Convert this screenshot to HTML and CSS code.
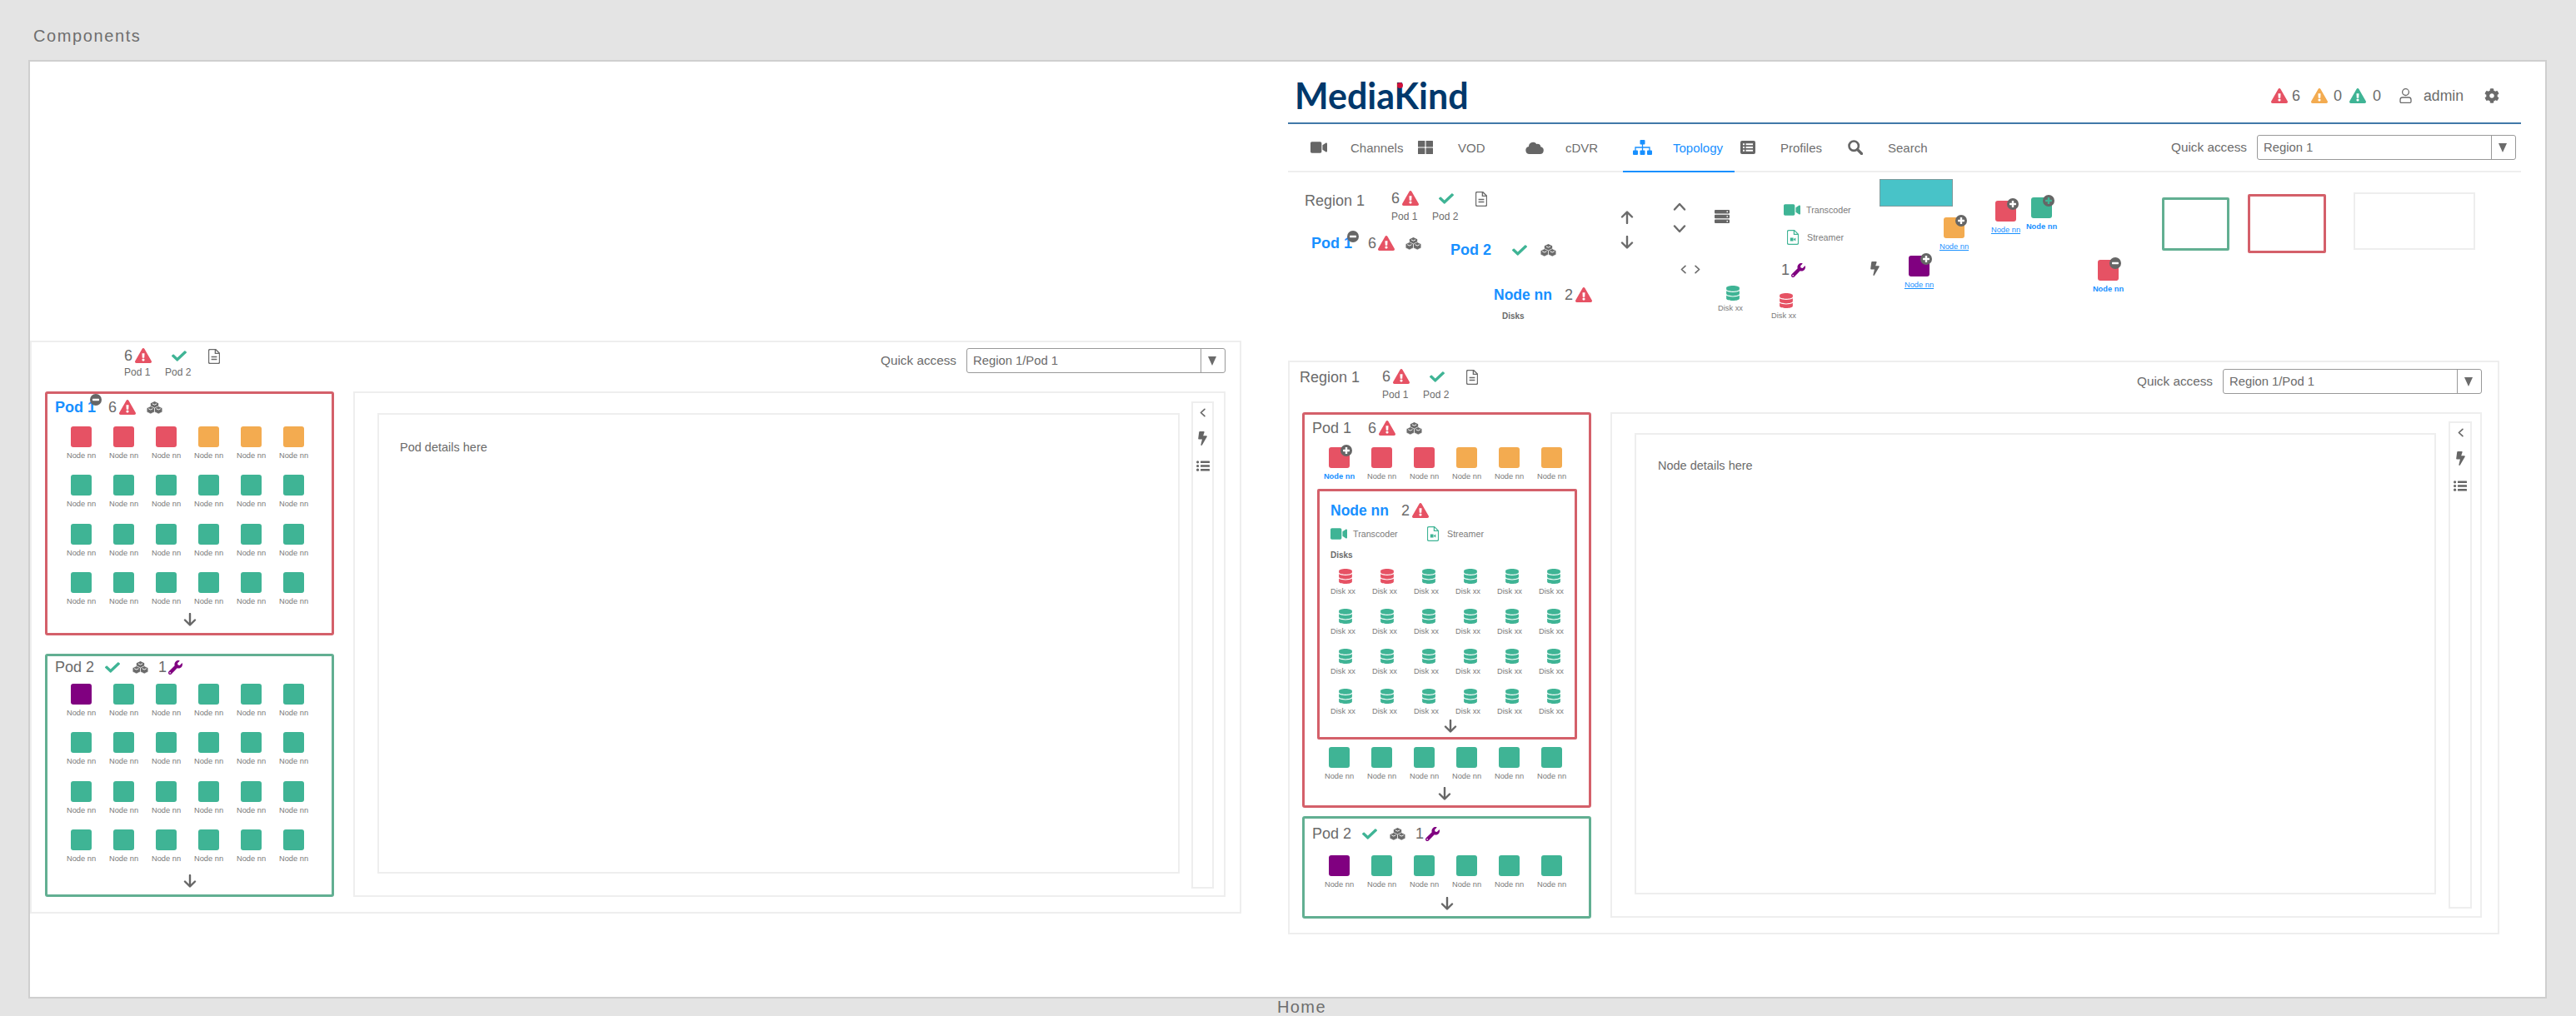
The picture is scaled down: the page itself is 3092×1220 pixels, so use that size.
FILE: index.html
```html
<!DOCTYPE html>
<html lang="en">
<head>
<meta charset="utf-8">
<title>Components</title>
<link rel="stylesheet" href="styles.css">
</head>
<body>
<svg class="defs" aria-hidden="true">
  <symbol id="alert" viewBox="0 0 576 512"><path d="M569.517 440.013C587.975 472.007 564.806 512 527.94 512H48.054c-36.937 0-59.999-40.055-41.577-71.987L246.423 23.985c18.467-32.009 64.72-31.951 83.154 0l239.94 416.028zM288 354c-25.405 0-46 20.595-46 46s20.595 46 46 46 46-20.595 46-46-20.595-46-46-46zm-43.673-165.346l7.418 136c.347 6.364 5.609 11.346 11.982 11.346h48.546c6.373 0 11.635-4.982 11.982-11.346l7.418-136c.375-6.874-5.098-12.654-11.982-12.654h-63.383c-6.884 0-12.356 5.78-11.981 12.654z"/></symbol>
  <symbol id="check" viewBox="0 60 512 392" preserveAspectRatio="none"><path d="M173.898 439.404l-166.4-166.4c-9.997-9.997-9.997-26.206 0-36.204l36.203-36.204c9.997-9.998 26.207-9.998 36.204 0L192 312.69 432.095 72.596c9.997-9.997 26.207-9.997 36.204 0l36.203 36.204c9.997 9.997 9.997 26.206 0 36.204l-294.4 294.401c-9.998 9.997-26.207 9.997-36.204-.001z"/></symbol>
  <symbol id="doc" viewBox="0 0 14 18"><path d="M1.5.5h7.2l4.8 4.8v10.5q0 1.7-1.7 1.7H2.2q-1.7 0-1.7-1.7V2.2Q.5.5 2.2.5z" fill="none" stroke="currentColor" stroke-width="1.4"/><path d="M8.4.8v4.6h4.8M3.6 9.5h6.8M3.6 12.5h6.8" fill="none" stroke="currentColor" stroke-width="1.4"/></symbol>
  <symbol id="cubes" viewBox="0 0 20 16"><path d="M10 0l5 2.500v5L10 10 5 7.500v-5z"/><path d="M5 6l5 2.500v5L5 16l-5-2.500v-5z" stroke="#fff" stroke-width=".7"/><path d="M15 6l5 2.500v5L15 16l-5-2.500v-5z" stroke="#fff" stroke-width=".7"/><path d="M7.200 3L10 4.400 12.800 3M2.200 9.300L5 10.700l2.800-1.400M12.200 9.300l2.800 1.400 2.800-1.400" fill="none" stroke="#fff" stroke-width="1"/></symbol>
  <symbol id="wrench" viewBox="0 0 512 512"><path d="M507.73 109.1c-2.24-9.03-13.54-12.09-20.12-5.51l-74.36 74.36-67.88-11.31-11.31-67.88 74.36-74.36c6.62-6.62 3.43-17.9-5.66-20.16-47.38-11.74-99.55.91-136.58 37.93-39.64 39.64-50.55 97.1-34.05 147.2L18.74 402.76c-24.99 24.99-24.99 65.51 0 90.5 24.99 24.99 65.51 24.99 90.5 0l213.21-213.21c50.12 16.71 107.47 5.68 147.37-34.22 37.07-37.07 49.7-89.32 37.91-136.73zM64 472c-13.25 0-24-10.75-24-24 0-13.26 10.75-24 24-24s24 10.74 24 24c0 13.25-10.75 24-24 24z"/></symbol>
  <symbol id="bolt" viewBox="0 0 320 512"><path d="M296 160H180.6l42.6-129.8C227.2 15 215.700 0 200 0H56C44 0 33.800 8.900 32.200 20.800l-32 240C-1.700 275.200 9.500 288 24 288h118.700L96.600 482.500c-3.600 15.200 8 29.500 23.300 29.500 8.400 0 16.400-4.400 20.800-12l176-304c9.300-15.900-2.200-36-20.700-36z"/></symbol>
  <symbol id="list" viewBox="0 0 16 13"><circle cx="1.600" cy="1.800" r="1.600"/><circle cx="1.600" cy="6.500" r="1.600"/><circle cx="1.600" cy="11.200" r="1.600"/><rect x="5" y=".6" width="11" height="2.400" rx=".5"/><rect x="5" y="5.300" width="11" height="2.400" rx=".5"/><rect x="5" y="10" width="11" height="2.400" rx=".5"/></symbol>
  <symbol id="disk" viewBox="0 0 448 512"><path d="M448 73.143v45.714C448 159.143 347.667 192 224 192S0 159.143 0 118.857V73.143C0 32.857 100.333 0 224 0s224 32.857 224 73.143zM448 176v102.857C448 319.143 347.667 352 224 352S0 319.143 0 278.857V176c48.125 33.143 136.208 48.572 224 48.572S399.874 209.143 448 176zm0 160v102.857C448 479.143 347.667 512 224 512S0 479.143 0 438.857V336c48.125 33.143 136.208 48.572 224 48.572S399.874 369.143 448 336z"/></symbol>
  <symbol id="video" viewBox="0 64 576 384"><path d="M336.200 64H47.800C21.400 64 0 85.400 0 111.800v288.400C0 426.600 21.400 448 47.800 448h288.400c26.400 0 47.800-21.400 47.800-47.800V111.800c0-26.400-21.400-47.800-47.800-47.800zm189.400 37.700L416 177.300v157.400l109.600 75.500c21.200 14.600 50.400-.3 50.400-25.800V127.500c0-25.400-29.100-40.400-50.400-25.800z"/></symbol>
  <symbol id="filevideo" viewBox="0 0 14 18"><path d="M1.500.6h7.200l4.800 4.800v10.400q0 1.600-1.600 1.600H2.100q-1.600 0-1.600-1.600V2.200Q.5.600 2.100.6z" fill="none" stroke="currentColor" stroke-width="1.200"/><path d="M8.400.8v4.600h4.800" fill="none" stroke="currentColor" stroke-width="1.200"/><path d="M3.800 9.500h3.800v4H3.800zM8.100 11l2.200-1.500v4L8.100 12z"/></symbol>
  <symbol id="grid4" viewBox="0 0 18 16"><rect width="8.400" height="7.500" rx=".6"/><rect x="9.600" width="8.400" height="7.500" rx=".6"/><rect y="8.500" width="8.400" height="7.500" rx=".6"/><rect x="9.600" y="8.500" width="8.400" height="7.500" rx=".6"/></symbol>
  <symbol id="cloud" viewBox="0 0 22 15"><path d="M5 15a4.600 4.600 0 0 1-1-9.100A5.200 5.200 0 0 1 13.400 3a3.600 3.600 0 0 1 4.900 3.300A4.400 4.400 0 0 1 17.500 15z"/></symbol>
  <symbol id="sitemap" viewBox="0 0 23 18"><rect x="8.500" width="6" height="5.500" rx="1"/><rect y="12.500" width="6" height="5.500" rx="1"/><rect x="8.500" y="12.500" width="6" height="5.500" rx="1"/><rect x="17" y="12.500" width="6" height="5.500" rx="1"/><path d="M11.500 5v8M3 13V9h17v4" fill="none" stroke="currentColor" stroke-width="1.300"/></symbol>
  <symbol id="listalt" viewBox="0 0 18 16"><path fill-rule="evenodd" d="M2 0h14a2 2 0 0 1 2 2v12a2 2 0 0 1-2 2H2a2 2 0 0 1-2-2V2a2 2 0 0 1 2-2zM3 3.200v2h2v-2zM6.500 3.200v2H15v-2zM3 7v2h2V7zM6.500 7v2H15V7zM3 10.800v2h2v-2zM6.500 10.800v2H15v-2z"/></symbol>
  <symbol id="search" viewBox="0 0 18 18"><circle cx="7.200" cy="7.200" r="5.700" fill="none" stroke="currentColor" stroke-width="2.600"/><path d="M11.500 11.500l5 5" stroke="currentColor" stroke-width="3.200" stroke-linecap="round"/></symbol>
  <symbol id="user" viewBox="0 0 15 18"><circle cx="7.500" cy="4.600" r="3.900" fill="none" stroke="currentColor" stroke-width="1.300"/><path d="M1 16v-2.300q0-2.700 2.700-2.700h7.600q2.700 0 2.700 2.700V16q0 1.300-1.300 1.300H2.300Q1 17.300 1 16z" fill="none" stroke="currentColor" stroke-width="1.300"/></symbol>
  <symbol id="gear" viewBox="0 0 512 512"><path d="M487.400 315.700l-42.600-24.600c4.300-23.200 4.300-47 0-70.200l42.600-24.600c4.900-2.800 7.100-8.600 5.500-14-11.100-35.600-30-67.800-54.700-94.600-3.800-4.100-10-5.100-14.800-2.300L380.800 110c-17.900-15.400-38.500-27.300-60.800-35.100V25.800c0-5.600-3.900-10.500-9.400-11.700-36.700-8.200-74.300-7.800-109.200 0-5.500 1.200-9.400 6.100-9.400 11.700V75c-22.200 7.900-42.800 19.800-60.800 35.100L88.700 85.500c-4.900-2.800-11-1.900-14.800 2.300-24.700 26.700-43.600 58.900-54.700 94.600-1.700 5.400.6 11.200 5.500 14L67.300 221c-4.300 23.200-4.300 47 0 70.200l-42.600 24.600c-4.900 2.800-7.100 8.600-5.500 14 11.100 35.600 30 67.800 54.700 94.600 3.800 4.100 10 5.100 14.800 2.300l42.600-24.600c17.900 15.400 38.500 27.300 60.800 35.100v49.200c0 5.600 3.900 10.500 9.400 11.700 36.700 8.200 74.300 7.800 109.200 0 5.500-1.200 9.400-6.100 9.400-11.700v-49.200c22.200-7.900 42.800-19.800 60.800-35.100l42.600 24.600c4.900 2.800 11 1.900 14.800-2.300 24.700-26.700 43.600-58.900 54.700-94.600 1.500-5.500-.7-11.300-5.600-14.100zM256 336c-44.100 0-80-35.900-80-80s35.900-80 80-80 80 35.900 80 80-35.900 80-80 80z"/></symbol>
  <symbol id="server" viewBox="0 0 18 16"><path fill-rule="evenodd" d="M1 0h16a1 1 0 0 1 1 1v2.600a1 1 0 0 1-1 1H1a1 1 0 0 1-1-1V1a1 1 0 0 1 1-1zM14.500 1.600v1.500H16V1.600zM1 5.700h16a1 1 0 0 1 1 1v2.600a1 1 0 0 1-1 1H1a1 1 0 0 1-1-1V6.700a1 1 0 0 1 1-1zM14.500 7.250v1.500H16v-1.500zM1 11.400h16a1 1 0 0 1 1 1V15a1 1 0 0 1-1 1H1a1 1 0 0 1-1-1v-2.600a1 1 0 0 1 1-1zM14.500 13v1.500H16V13z"/></symbol>
  <symbol id="down" viewBox="0 0 16 16"><path d="M8 1v13M2 8.500L8 14.500l6-6" fill="none" stroke="currentColor" stroke-width="2.400" stroke-linecap="round" stroke-linejoin="round"/></symbol>
  <symbol id="up" viewBox="0 0 16 16"><path d="M8 15V2M2 7.500L8 1.500l6 6" fill="none" stroke="currentColor" stroke-width="2.400" stroke-linecap="round" stroke-linejoin="round"/></symbol>
  <symbol id="chev" viewBox="0 0 16 10"><path d="M2 8.500L8 2l6 6.500" fill="none" stroke="currentColor" stroke-width="2.400" stroke-linecap="round" stroke-linejoin="round"/></symbol>
  <symbol id="plusb" viewBox="0 0 14 14"><circle cx="7" cy="7" r="7"/><rect x="3" y="5.800" width="8" height="2.400" rx=".6" fill="#fff"/><rect x="5.800" y="3" width="2.400" height="8" rx=".6" fill="#fff"/></symbol>
  <symbol id="plusg" viewBox="0 0 14 14"><circle cx="7" cy="7" r="7"/><rect x="3" y="5.800" width="8" height="2.400" rx=".6" fill="#3fb495"/><rect x="5.800" y="3" width="2.400" height="8" rx=".6" fill="#3fb495"/></symbol>
  <symbol id="minusb" viewBox="0 0 14 14"><circle cx="7" cy="7" r="7"/><rect x="3" y="5.800" width="8" height="2.400" rx=".6" fill="#fff"/></symbol>
</svg>

<main class="canvas">
  <h1 class="page-title">Components</h1>
  <div class="artboard"></div>
  <h2 class="board-name">Home</h2>

  <!-- Pod details frame -->
  <section class="frame frame-pod">
    <header class="head head-pod">
      <div class="status status-pod">
        <div class="st-col st-a"><div class="st-top"><span>6</span><svg class="i-alert red"><use href="#alert"/></svg></div><div class="st-lab">Pod 1</div></div>
        <div class="st-col st-b"><div class="st-top st-ck"><svg class="i-check green"><use href="#check"/></svg></div><div class="st-lab">Pod 2</div></div>
        <svg class="i-doc"><use href="#doc"/></svg>
      </div>
      <div class="quick"><span class="q-lab">Quick access</span><div class="select"><span class="sel-text">Region 1/Pod 1</span><span class="sel-btn"></span></div></div>
    </header>
    <div class="body body-pod">
      <div class="pods pods-pod">
        <article class="pod bad pod-a">
          <div class="pod-title"><span class="t-blue">Pod 1</span><svg class="badge badge-title"><use href="#minusb"/></svg><span class="cnt c-a">6</span><svg class="i-alert red"><use href="#alert"/></svg><svg class="i-cubes c-cubes"><use href="#cubes"/></svg></div>
          <div class="nodes g-top11">
            <div class="nd r"><i></i>Node nn</div><div class="nd r"><i></i>Node nn</div><div class="nd r"><i></i>Node nn</div><div class="nd o"><i></i>Node nn</div><div class="nd o"><i></i>Node nn</div><div class="nd o"><i></i>Node nn</div>
            <div class="nd g"><i></i>Node nn</div><div class="nd g"><i></i>Node nn</div><div class="nd g"><i></i>Node nn</div><div class="nd g"><i></i>Node nn</div><div class="nd g"><i></i>Node nn</div><div class="nd g"><i></i>Node nn</div>
            <div class="nd g"><i></i>Node nn</div><div class="nd g"><i></i>Node nn</div><div class="nd g"><i></i>Node nn</div><div class="nd g"><i></i>Node nn</div><div class="nd g"><i></i>Node nn</div><div class="nd g"><i></i>Node nn</div>
            <div class="nd g"><i></i>Node nn</div><div class="nd g"><i></i>Node nn</div><div class="nd g"><i></i>Node nn</div><div class="nd g"><i></i>Node nn</div><div class="nd g"><i></i>Node nn</div><div class="nd g"><i></i>Node nn</div>
          </div>
          <div class="more m8"><svg class="i-down"><use href="#down"/></svg></div>
        </article>
        <article class="pod ok pod-b">
          <div class="pod-title pt1"><span class="t-grey">Pod 2</span><svg class="i-check green ck-t"><use href="#check"/></svg><svg class="i-cubes cb-t"><use href="#cubes"/></svg><span class="cnt c-w">1</span><svg class="i-wrench"><use href="#wrench"/></svg></div>
          <div class="nodes g-top8">
            <div class="nd p"><i></i>Node nn</div><div class="nd g"><i></i>Node nn</div><div class="nd g"><i></i>Node nn</div><div class="nd g"><i></i>Node nn</div><div class="nd g"><i></i>Node nn</div><div class="nd g"><i></i>Node nn</div>
            <div class="nd g"><i></i>Node nn</div><div class="nd g"><i></i>Node nn</div><div class="nd g"><i></i>Node nn</div><div class="nd g"><i></i>Node nn</div><div class="nd g"><i></i>Node nn</div><div class="nd g"><i></i>Node nn</div>
            <div class="nd g"><i></i>Node nn</div><div class="nd g"><i></i>Node nn</div><div class="nd g"><i></i>Node nn</div><div class="nd g"><i></i>Node nn</div><div class="nd g"><i></i>Node nn</div><div class="nd g"><i></i>Node nn</div>
            <div class="nd g"><i></i>Node nn</div><div class="nd g"><i></i>Node nn</div><div class="nd g"><i></i>Node nn</div><div class="nd g"><i></i>Node nn</div><div class="nd g"><i></i>Node nn</div><div class="nd g"><i></i>Node nn</div>
          </div>
          <div class="more m13"><svg class="i-down"><use href="#down"/></svg></div>
        </article>
      </div>
      <div class="details">
        <div class="det-inner"><p class="det-text">Pod details here</p></div>
        <aside class="strip"><svg class="i-chev-l"><use href="#chev"/></svg><svg class="i-bolt"><use href="#bolt"/></svg><svg class="i-list"><use href="#list"/></svg></aside>
      </div>
    </div>
  </section>

  <!-- Node details frame -->
  <section class="frame frame-node">
    <header class="head head-node">
      <div class="region">Region 1</div>
      <div class="status status-node">
        <div class="st-col st-a"><div class="st-top"><span>6</span><svg class="i-alert red"><use href="#alert"/></svg></div><div class="st-lab lab4">Pod 1</div></div>
        <div class="st-col st-b"><div class="st-top st-ck"><svg class="i-check green"><use href="#check"/></svg></div><div class="st-lab lab4">Pod 2</div></div>
        <svg class="i-doc"><use href="#doc"/></svg>
      </div>
      <div class="quick q8"><span class="q-lab">Quick access</span><div class="select"><span class="sel-text">Region 1/Pod 1</span><span class="sel-btn"></span></div></div>
    </header>
    <div class="body body-node">
      <div class="pods pods-node">
        <article class="pod bad pod-c">
          <div class="pod-title"><span class="t-grey">Pod 1</span><span class="cnt c-b">6</span><svg class="i-alert red"><use href="#alert"/></svg><svg class="i-cubes c-cubes"><use href="#cubes"/></svg></div>
          <div class="nodes g-top11">
            <div class="nd r sel"><i><svg class="badge"><use href="#plusb"/></svg></i>Node nn</div><div class="nd r"><i></i>Node nn</div><div class="nd r"><i></i>Node nn</div><div class="nd o"><i></i>Node nn</div><div class="nd o"><i></i>Node nn</div><div class="nd o"><i></i>Node nn</div>
          </div>
          <section class="node-box">
            <div class="nb-title"><span class="nb-name">Node nn</span><span class="cnt c-n">2</span><svg class="i-alert red"><use href="#alert"/></svg></div>
            <div class="services"><span class="svc svc-t"><svg class="i-video green"><use href="#video"/></svg>Transcoder</span><span class="svc"><svg class="i-filev green"><use href="#filevideo"/></svg>Streamer</span></div>
            <div class="disks-title">Disks</div>
            <div class="disks">
              <div class="dk r"><svg><use href="#disk"/></svg><span>Disk xx</span></div><div class="dk r"><svg><use href="#disk"/></svg><span>Disk xx</span></div><div class="dk"><svg><use href="#disk"/></svg><span>Disk xx</span></div><div class="dk"><svg><use href="#disk"/></svg><span>Disk xx</span></div><div class="dk"><svg><use href="#disk"/></svg><span>Disk xx</span></div><div class="dk"><svg><use href="#disk"/></svg><span>Disk xx</span></div>
              <div class="dk"><svg><use href="#disk"/></svg><span>Disk xx</span></div><div class="dk"><svg><use href="#disk"/></svg><span>Disk xx</span></div><div class="dk"><svg><use href="#disk"/></svg><span>Disk xx</span></div><div class="dk"><svg><use href="#disk"/></svg><span>Disk xx</span></div><div class="dk"><svg><use href="#disk"/></svg><span>Disk xx</span></div><div class="dk"><svg><use href="#disk"/></svg><span>Disk xx</span></div>
              <div class="dk"><svg><use href="#disk"/></svg><span>Disk xx</span></div><div class="dk"><svg><use href="#disk"/></svg><span>Disk xx</span></div><div class="dk"><svg><use href="#disk"/></svg><span>Disk xx</span></div><div class="dk"><svg><use href="#disk"/></svg><span>Disk xx</span></div><div class="dk"><svg><use href="#disk"/></svg><span>Disk xx</span></div><div class="dk"><svg><use href="#disk"/></svg><span>Disk xx</span></div>
              <div class="dk"><svg><use href="#disk"/></svg><span>Disk xx</span></div><div class="dk"><svg><use href="#disk"/></svg><span>Disk xx</span></div><div class="dk"><svg><use href="#disk"/></svg><span>Disk xx</span></div><div class="dk"><svg><use href="#disk"/></svg><span>Disk xx</span></div><div class="dk"><svg><use href="#disk"/></svg><span>Disk xx</span></div><div class="dk"><svg><use href="#disk"/></svg><span>Disk xx</span></div>
            </div>
            <div class="more m4 shift"><svg class="i-down"><use href="#down"/></svg></div>
          </section>
          <div class="nodes g-top9">
            <div class="nd g"><i></i>Node nn</div><div class="nd g"><i></i>Node nn</div><div class="nd g"><i></i>Node nn</div><div class="nd g"><i></i>Node nn</div><div class="nd g"><i></i>Node nn</div><div class="nd g"><i></i>Node nn</div>
          </div>
          <div class="more m7 shift"><svg class="i-down"><use href="#down"/></svg></div>
        </article>
        <article class="pod ok pod-d">
          <div class="pod-title pt6"><span class="t-grey">Pod 2</span><svg class="i-check green ck-t"><use href="#check"/></svg><svg class="i-cubes cb-t"><use href="#cubes"/></svg><span class="cnt c-w">1</span><svg class="i-wrench"><use href="#wrench"/></svg></div>
          <div class="nodes g-top14">
            <div class="nd p"><i></i>Node nn</div><div class="nd g"><i></i>Node nn</div><div class="nd g"><i></i>Node nn</div><div class="nd g"><i></i>Node nn</div><div class="nd g"><i></i>Node nn</div><div class="nd g"><i></i>Node nn</div>
          </div>
          <div class="more m9"><svg class="i-down"><use href="#down"/></svg></div>
        </article>
      </div>
      <div class="details details-node">
        <div class="det-inner"><p class="det-text dt-node">Node details here</p></div>
        <aside class="strip strip-node"><svg class="i-chev-l"><use href="#chev"/></svg><svg class="i-bolt"><use href="#bolt"/></svg><svg class="i-list"><use href="#list"/></svg></aside>
      </div>
    </div>
  </section>

  <!-- App shell at the top of the right side -->
  <section class="shell">
    <div class="topbar">
      <div class="logo"><span class="logo-text">MediaKind</span><span class="logo-dot"></span></div>
      <div class="top-right">
        <svg class="i-alert red"><use href="#alert"/></svg><span class="tr-n">6</span>
        <svg class="i-alert orange tr-gap"><use href="#alert"/></svg><span class="tr-n tr-n7">0</span>
        <svg class="i-alert green tr-gap2"><use href="#alert"/></svg><span class="tr-n tr-n8">0</span>
        <svg class="i-user"><use href="#user"/></svg><span class="admin">admin</span>
        <svg class="i-gear"><use href="#gear"/></svg>
      </div>
    </div>
    <nav class="nav">
      <a class="nav-item"><span class="nav-ic"><svg class="n-video"><use href="#video"/></svg></span>Channels</a>
      <a class="nav-item"><span class="nav-ic"><svg class="n-grid"><use href="#grid4"/></svg></span>VOD</a>
      <a class="nav-item"><span class="nav-ic"><svg class="n-cloud"><use href="#cloud"/></svg></span>cDVR</a>
      <a class="nav-item active"><span class="nav-ic"><svg class="n-site"><use href="#sitemap"/></svg></span>Topology</a>
      <a class="nav-item"><span class="nav-ic"><svg class="n-grid"><use href="#listalt"/></svg></span>Profiles</a>
      <a class="nav-item"><span class="nav-ic"><svg class="n-search"><use href="#search"/></svg></span>Search</a>
      <div class="quick q-nav"><span class="q-lab">Quick access</span><div class="select"><span class="sel-text">Region 1</span><span class="sel-btn"></span></div></div>
    </nav>
  </section>

  <!-- Loose component stickers -->
  <div class="s s-region">Region 1</div>
  <div class="s s-status"><div class="st-col st-a"><div class="st-top"><span>6</span><svg class="i-alert red"><use href="#alert"/></svg></div><div class="st-lab lab4">Pod 1</div></div><div class="st-col st-b"><div class="st-top st-ck"><svg class="i-check green"><use href="#check"/></svg></div><div class="st-lab lab4">Pod 2</div></div><svg class="i-doc"><use href="#doc"/></svg></div>
  <div class="s s-pod1 pod-title"><span class="t-blue">Pod 1</span><svg class="badge badge-s"><use href="#minusb"/></svg><span class="cnt c-s">6</span><svg class="i-alert red"><use href="#alert"/></svg><svg class="i-cubes c-cubes"><use href="#cubes"/></svg></div>
  <div class="s s-pod2 pod-title"><span class="t-blue">Pod 2</span><svg class="i-check green ck-s"><use href="#check"/></svg><svg class="i-cubes cb-s"><use href="#cubes"/></svg></div>
  <div class="s s-node nb-title"><span class="nb-name">Node nn</span><span class="cnt c-n">2</span><svg class="i-alert red"><use href="#alert"/></svg></div>
  <div class="s s-disks disks-title">Disks</div>
  <svg class="s s-up i-down"><use href="#up"/></svg>
  <svg class="s s-dn i-down"><use href="#down"/></svg>
  <svg class="s s-cu i-chev"><use href="#chev"/></svg>
  <svg class="s s-cd i-chev flip"><use href="#chev"/></svg>
  <svg class="s s-server"><use href="#server"/></svg>
  <svg class="s s-cl i-chev-l"><use href="#chev"/></svg>
  <svg class="s s-cr i-chev-l flipx"><use href="#chev"/></svg>
  <div class="s s-trans svc"><svg class="i-video green"><use href="#video"/></svg>Transcoder</div>
  <div class="s s-stream svc"><svg class="i-filev green"><use href="#filevideo"/></svg>Streamer</div>
  <div class="s s-wrench"><span class="cnt">1</span><svg class="i-wrench"><use href="#wrench"/></svg></div>
  <svg class="s s-bolt i-bolt"><use href="#bolt"/></svg>
  <div class="s s-dg dk"><svg><use href="#disk"/></svg><span>Disk xx</span></div>
  <div class="s s-dr dk r"><svg><use href="#disk"/></svg><span>Disk xx</span></div>
  <div class="s s-teal"></div>
  <div class="s s-n1 nd p lnk"><i><svg class="badge"><use href="#plusb"/></svg></i>Node nn</div>
  <div class="s s-n2 nd o lnk"><i><svg class="badge"><use href="#plusb"/></svg></i>Node nn</div>
  <div class="s s-n3 nd r lnk"><i><svg class="badge"><use href="#plusb"/></svg></i>Node nn</div>
  <div class="s s-n4 nd g sel"><i><svg class="badge"><use href="#plusg"/></svg></i>Node nn</div>
  <div class="s s-n5 nd r sel"><i><svg class="badge"><use href="#minusb"/></svg></i>Node nn</div>
  <div class="s s-box-g"></div>
  <div class="s s-box-r"></div>
  <div class="s s-box-e"></div>
</main>
</body>
</html>
```

FILE: styles.css
```css
* { box-sizing: border-box; }
html, body { margin: 0; padding: 0; }
body { background: #e4e4e4; color: #6b6b6b; font-family: "Liberation Sans", Arial, sans-serif; overflow: hidden; }
.defs { position: absolute; width: 0; height: 0; }
svg { display: block; fill: currentColor; flex: none; }
.canvas { position: relative; width: 3092px; height: 1220px; overflow: hidden; }

.page-title { position: absolute; left: 40px; top: 31px; margin: 0; font-size: 20px; line-height: 24px; font-weight: 400; letter-spacing: 1.6px; color: #6e6e6e; }
.board-name { position: absolute; left: 1533px; top: 1197px; margin: 0; font-size: 20px; line-height: 24px; font-weight: 400; letter-spacing: 1.4px; color: #6e6e6e; }
.artboard { position: absolute; left: 34px; top: 72px; width: 3023px; height: 1127px; background: #fff; border: 2px solid #cfcfcf; }

.red { color: #e65264; }
.green { color: #3fb495; }
.orange { color: #f3ab50; }

/* frames */
.frame { position: absolute; background: #fff; border: 2px solid #eee; }
.frame-pod { left: 36px; top: 409px; width: 1454px; height: 688px; padding: 0 17px 0 16px; }
.frame-node { left: 1546px; top: 433px; width: 1454px; height: 689px; padding: 0 19px 0 15px; }
.head { display: flex; align-items: flex-start; }
.head-pod { height: 59px; }
.head-node { height: 60px; }
.region { font-size: 18px; line-height: 22px; margin: 7px 0 0 -3px; width: 99px; }
.status { display: flex; align-items: flex-start; }
.status-pod { margin: 5px 0 0 95px; }
.status-node { margin-top: 6px; }
.st-col { display: flex; flex-direction: column; }
.st-a { width: 49px; }
.st-b { width: 52px; }
.st-top { display: flex; align-items: center; height: 22px; font-size: 18px; line-height: 22px; }
.st-top span { width: 13px; }
.st-ck { padding-left: 8px; }
.st-lab { font-size: 12px; line-height: 14px; margin-top: 2px; }
.lab4 { margin-top: 4px; }
.i-alert { width: 20px; height: 18px; }
.i-check { width: 18px; height: 13px; }
.i-doc { width: 14px; height: 18px; margin-top: 3px; }
.i-cubes { width: 19px; height: 15px; }
.i-wrench { width: 17px; height: 17px; color: #800080; }
.i-down { width: 16px; height: 16px; }
.i-chev { width: 16px; height: 10px; }
.i-chev-l { width: 11px; height: 7px; transform: rotate(-90deg); }
.flip { transform: scaleY(-1); }
.flipx { transform: rotate(90deg); }
.i-bolt { width: 11px; height: 17px; }
.i-list { width: 16px; height: 13px; }
.i-video { width: 20px; height: 14px; }
.i-filev { width: 14px; height: 18px; }

.quick { display: flex; align-items: center; margin-left: auto; margin-top: 7px; gap: 12px; }
.q8 { margin-top: 8px; }
.q-lab { font-size: 15.3px; }
.select { display: flex; width: 311px; height: 30px; border: 1px solid #999; border-radius: 3px; background: #fff; }
.sel-text { flex: 1; font-size: 14.8px; line-height: 28px; padding-left: 7px; }
.sel-btn { position: relative; width: 29px; border-left: 1px solid #999; }
.sel-btn::after { content: ""; position: absolute; left: 8px; top: 9px; border: 5.5px solid transparent; border-top: 11px solid #6b6b6b; border-bottom: 0; }

/* body */
.body { display: flex; }
.pods { display: flex; flex-direction: column; width: 347px; flex: none; }
.pods-pod { gap: 22px; }
.pods-node { gap: 10px; }
.pod { border: 3px solid; border-radius: 3px; }
.bad { border-color: #d4606a; }
.ok { border-color: #62af92; }
.pod-a { height: 293px; }
.pod-b { height: 292px; }
.pod-c { height: 475px; }
.pod-d { height: 123px; }
.pod-title { position: relative; display: flex; align-items: center; height: 24px; margin-top: 4px; padding-left: 9px; font-size: 18px; line-height: 24px; white-space: nowrap; }
.pt1 { margin-top: 1px; }
.pt6 { margin-top: 6px; }
.t-blue { color: #1890ff; font-weight: 700; }
.t-grey { color: #6b6b6b; }
.badge { position: absolute; width: 14px; height: 14px; color: #666; }
.badge-title { left: 51px; top: -4px; }
.badge-s { left: 52px; top: -3px; }
.cnt { font-size: 18px; }
.c-a { margin-left: 15px; width: 13px; flex: none; }
.c-b { margin-left: 20px; width: 13px; flex: none; }
.c-s { margin-left: 19px; width: 12px; flex: none; }
.c-w { margin-left: 12px; width: 12px; flex: none; }
.c-cubes { margin-left: 13px; }
.ck-t { margin-left: 13px; }
.cb-t { margin-left: 15px; }
.ck-s { margin-left: 25px; }
.cb-s { margin-left: 16px; }

.nodes { display: grid; grid-template-columns: repeat(6, 51px); row-gap: 17.4px; margin-left: 15px; }
.g-top8 { margin-top: 8px; }
.g-top9 { margin-top: 9px; margin-left: 16px; }
.g-top11 { margin-top: 11px; }
.pod-c .g-top11 { margin-left: 16px; }
.g-top14 { margin-top: 14px; margin-left: 16px; }
.nd { height: 41px; font-size: 9.3px; line-height: 12px; text-align: center; color: #7a7a7a; white-space: nowrap; }
.nd i { position: relative; display: block; width: 25px; height: 25px; margin: 0 auto 4px; border-radius: 3px; }
.nd.r i { background: #e65264; }
.nd.o i { background: #f3ab50; }
.nd.g i { background: #3fb495; }
.nd.p i { background: #800080; }
.nd .badge { right: -3px; top: -3px; }
.sel { color: #1890ff; font-weight: 700; }
.lnk { color: #1890ff; text-decoration: underline; }

.more { display: flex; justify-content: center; color: #666; }
.m4 { margin-top: 4px; }
.m7 { margin-top: 7px; }
.m8 { margin-top: 8px; }
.m9 { margin-top: 9px; }
.m13 { margin-top: 13px; }
.shift { padding-right: 6px; }

/* node box */
.node-box { width: 312px; height: 301px; margin: 9px 0 0 15px; border: 3px solid #d4606a; border-radius: 2px; padding: 11px 0 0 13px; }
.nb-title { display: flex; align-items: center; height: 24px; white-space: nowrap; }
.nb-name { color: #1890ff; font-weight: 700; font-size: 17.5px; }
.c-n { margin-left: 15px; width: 13px; flex: none; font-size: 18px; }
.services { display: flex; height: 18px; margin-top: 7px; }
.svc { display: flex; align-items: center; font-size: 10.7px; color: #7a7a7a; white-space: nowrap; }
.svc-t { width: 116px; }
.svc .i-video { margin-right: 7px; }
.svc .i-filev { margin-right: 10px; }
.disks-title { height: 12px; margin-top: 11px; font-size: 10px; line-height: 12px; font-weight: 700; color: #6b6b6b; }
.disks { display: grid; grid-template-columns: repeat(6, 50px); row-gap: 15px; margin-top: 10px; }
.dk { color: #3fb495; height: 33px; }
.dk.r { color: #e65264; }
.dk svg { width: 16px; height: 18px; margin-left: 10px; }
.dk span { display: block; margin-top: 3px; font-size: 9.3px; line-height: 12px; color: #7a7a7a; white-space: nowrap; }

/* details */
.details { display: flex; align-items: flex-start; flex: none; width: 1047px; height: 607px; margin-left: 23px; padding: 10px 12px 0 27px; border: 2px solid #eee; gap: 14px; }
.details-node { width: 1046px; margin-left: 23px; padding: 9px 10px 0 27px; gap: 15px; }
.det-inner { flex: 1; height: 553px; margin-top: 14px; border: 2px solid #eee; }
.details-node .det-inner { height: 554px; }
.det-text { margin: 30px 0 0 25px; font-size: 14.5px; line-height: 18px; }
.dt-node { margin-top: 28px; margin-left: 26px; }
.strip { display: flex; flex-direction: column; align-items: center; flex: none; width: 27px; height: 585px; padding-top: 8px; border: 2px solid #eee; color: #666; }
.strip-node { width: 28px; }
.strip .i-bolt { margin-top: 19px; }
.strip .i-list { margin-top: 18px; }

/* shell */
.shell { position: absolute; left: 1546px; top: 90px; width: 1480px; }
.topbar { display: flex; align-items: center; justify-content: space-between; height: 59px; border-bottom: 2px solid #4178a8; padding: 0 26px 0 8px; }
.logo { position: relative; width: 207px; height: 42px; }
.logo-text { position: absolute; left: 0; top: -7px; font-family: Lato, "Liberation Sans", sans-serif; font-size: 43px; line-height: 48px; font-weight: 700; color: #00386b; white-space: nowrap; }
.logo-dot { position: absolute; left: 123px; top: 1px; width: 7px; height: 7px; border-radius: 50%; background: #d0103a; }
.top-right { display: flex; align-items: center; height: 24px; margin-top: -7px; font-size: 18px; }
.tr-n { margin-left: 5px; width: 10px; }
.tr-n7 { margin-left: 7px; }
.tr-n8 { margin-left: 8px; }
.tr-gap { margin-left: 13px; }
.tr-gap2 { margin-left: 9px; }
.i-user { width: 15px; height: 18px; margin-left: 22px; }
.admin { margin-left: 14px; font-size: 17.6px; }
.i-gear { width: 18px; height: 18px; margin-left: 25px; }
.nav { display: flex; align-items: center; height: 58px; padding: 0 6px 0 27px; border-bottom: 2px solid #eee; }
.nav-item { position: relative; display: flex; align-items: center; flex: none; width: 129px; height: 100%; font-size: 15px; color: #6f6f6f; }
.nav-ic { width: 48px; color: #666; }
.nav-item.active { color: #1890ff; width: 129px; }
.nav-item.active .nav-ic { color: #1890ff; }
.nav-item.active::after { content: ""; position: absolute; left: -12px; bottom: -2px; width: 134px; height: 2px; background: #1890ff; }
.n-video { width: 20px; height: 14px; }
.n-grid { width: 18px; height: 16px; }
.n-cloud { width: 22px; height: 15px; }
.n-site { width: 23px; height: 18px; }
.n-search { width: 18px; height: 18px; }
.q-nav { margin-top: 0; }

/* free canvas of loose component samples */
.s { position: absolute; }
.s-region { left: 1566px; top: 230px; font-size: 18px; line-height: 22px; }
.s-status { display: flex; align-items: flex-start; left: 1670px; top: 227px; }
.s-pod1 { left: 1565px; top: 280px; margin: 0; }
.s-pod2 { left: 1732px; top: 288px; margin: 0; }
.s-node { left: 1793px; top: 342px; }
.s-disks { left: 1803px; top: 374px; margin: 0; }
.s-up { left: 1945px; top: 253px; }
.s-dn { left: 1945px; top: 283px; }
.s-cu { left: 2008px; top: 243px; }
.s-cd { left: 2008px; top: 270px; }
.s-server { left: 2058px; top: 252px; width: 18px; height: 16px; color: #666; }
.s-cl { left: 2014.5px; top: 319.5px; }
.s-cr { left: 2031.5px; top: 319.5px; }
.s-trans { left: 2141px; top: 245px; height: 14px; }
.s-stream { left: 2145px; top: 276px; height: 18px; }
.s-wrench { display: flex; align-items: center; left: 2138px; top: 313px; height: 22px; line-height: 22px; }
.s-wrench .cnt { width: 12px; }
.s-bolt { left: 2245px; top: 314px; color: #666; }
.s-dg { left: 2062px; top: 343px; color: #3fb495; }
.s-dr { left: 2126px; top: 352px; }
.s-teal { left: 2256px; top: 215px; width: 88px; height: 33px; background: #48c3c8; border: 1px solid #7d9a9c; }
.s-n1 { left: 2278px; top: 307px; width: 51px; }
.s-n2 { left: 2320px; top: 261px; width: 51px; }
.s-n3 { left: 2382px; top: 241px; width: 51px; }
.s-n4 { left: 2425px; top: 237px; width: 51px; }
.s-n5 { left: 2505px; top: 312px; width: 51px; }
.s-box-g { left: 2595px; top: 237px; width: 81px; height: 64px; border: 3px solid #62af92; border-radius: 2px; }
.s-box-r { left: 2698px; top: 233px; width: 94px; height: 71px; border: 3px solid #d4606a; border-radius: 2px; }
.s-box-e { left: 2825px; top: 231px; width: 146px; height: 69px; border: 2px solid #eee; }
```
